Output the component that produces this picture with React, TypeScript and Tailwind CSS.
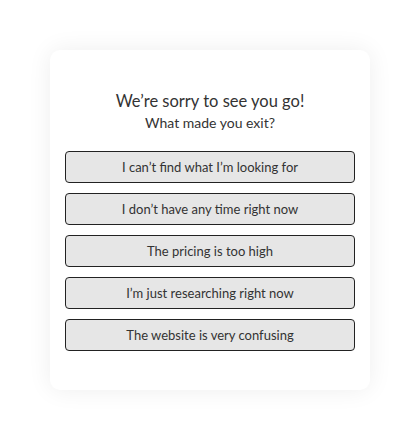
const REASONS = [
  'I can’t find what I’m looking for',
  'I don’t have any time right now',
  'The pricing is too high',
  'I’m just researching right now',
  'The website is very confusing',
];

export default function App() {
  return (
    <div className="w-[420px] h-[440px] bg-white pt-[50px] flex justify-center" style={{ fontFamily: 'Lato, "Open Sans", sans-serif' }}>
      <div className="w-[320px] h-[340px] bg-white rounded-[10px] shadow-[0_0_24px_rgba(0,0,0,0.07)] px-[15px] pt-[39px]">
        <h1 className="text-center text-[16.5px] leading-[24px] text-[#333]">We’re sorry to see you go!</h1>
        <p className="text-center text-[14px] leading-[20px] text-[#333]">What made you exit?</p>
        <div className="mt-[18px] flex flex-col gap-[10px]">
          {REASONS.map((r) => (
            <button
              key={r}
              className="h-[32px] w-full rounded-[4px] border border-[#222] bg-[#e6e6e6] pt-[2px] text-[13px] text-[#333]"
            >
              {r}
            </button>
          ))}
        </div>
      </div>
    </div>
  );
}
